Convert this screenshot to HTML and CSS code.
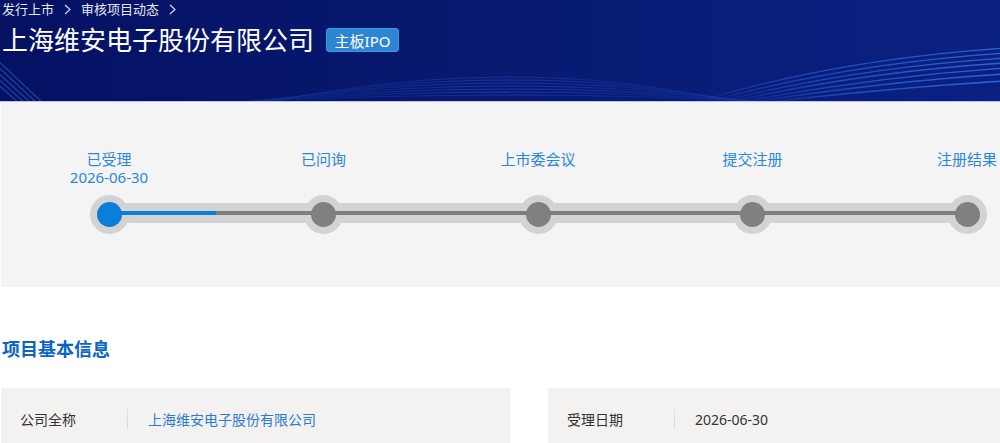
FILE: index.html
```html
<!DOCTYPE html>
<html lang="zh-CN">
<head>
<meta charset="utf-8">
<title>上海维安电子股份有限公司</title>
<link rel="stylesheet" href="styles.css">
</head>
<body>
<header class="hero">
  <svg class="hero-bg" width="1000" height="101" viewBox="0 0 1000 101" preserveAspectRatio="none" aria-hidden="true">
    <defs>
      <linearGradient id="rg" x1="0" y1="0" x2="1" y2="0">
        <stop offset="0" stop-color="#2f66e0" stop-opacity="0"/>
        <stop offset="0.35" stop-color="#2f66e0" stop-opacity="0.6"/>
        <stop offset="1" stop-color="#3a74ea" stop-opacity="0.8"/>
      </linearGradient>
      <linearGradient id="mg" x1="0" y1="0" x2="1" y2="0">
        <stop offset="0" stop-color="#2a5ad8" stop-opacity="0.05"/>
        <stop offset="0.5" stop-color="#2a5ad8" stop-opacity="0.45"/>
        <stop offset="1" stop-color="#2a5ad8" stop-opacity="0.05"/>
      </linearGradient>
    </defs>
    <g fill="none" stroke="#3d72e6" stroke-width="1.2" opacity="0.5">
      <path d="M-5 58 L44 104"/>
      <path d="M-5 64 L38 104"/>
      <path d="M-5 70 L32 104"/>
      <path d="M-5 76 L26 104"/>
      <path d="M-5 82 L20 104"/>
    </g>
    <g fill="none" stroke="url(#mg)" stroke-width="1.2">
      <path d="M260 104 Q520 50 740 104"/>
      <path d="M250 104 Q520 56 750 104"/>
      <path d="M240 104 Q520 62 760 104"/>
      <path d="M230 104 Q520 68 770 104"/>
      <path d="M220 104 Q520 74 780 104"/>
      <path d="M210 104 Q520 80 790 104"/>
      <path d="M200 104 Q520 86 800 104"/>
    </g>
    <g fill="none" stroke="url(#rg)" stroke-width="1.4">
      <path d="M690 104 Q830 60 1005 48"/>
      <path d="M700 104 Q840 64 1005 53"/>
      <path d="M710 104 Q850 68 1005 58"/>
      <path d="M720 104 Q860 72 1005 63"/>
      <path d="M730 104 Q870 77 1005 68"/>
      <path d="M740 104 Q880 82 1005 74"/>
      <path d="M750 104 Q890 88 1005 81"/>
    </g>
  </svg>
  <nav class="crumbs">
    <span>发行上市</span>
    <svg class="chev" width="7" height="11" viewBox="0 0 7 11" aria-hidden="true"><polyline points="1,1 6,5.5 1,10" fill="none" stroke="#d6dbee" stroke-width="1.2"/></svg>
    <span>审核项目动态</span>
    <svg class="chev" width="7" height="11" viewBox="0 0 7 11" aria-hidden="true"><polyline points="1,1 6,5.5 1,10" fill="none" stroke="#d6dbee" stroke-width="1.2"/></svg>
  </nav>
  <div class="title-row">
    <h1 class="company">上海维安电子股份有限公司</h1>
    <span class="badge">主板IPO</span>
  </div>
</header>

<section class="progress">
  <div class="track">
    <div class="steps">
      <div class="step done">
        <div class="label">已受理</div>
        <div class="date">2026-06-30</div>
        <div class="dot"></div>
      </div>
      <div class="step">
        <div class="label">已问询</div>
        <div class="date"></div>
        <div class="dot"></div>
      </div>
      <div class="step">
        <div class="label">上市委会议</div>
        <div class="date"></div>
        <div class="dot"></div>
      </div>
      <div class="step">
        <div class="label">提交注册</div>
        <div class="date"></div>
        <div class="dot"></div>
      </div>
      <div class="step">
        <div class="label">注册结果</div>
        <div class="date"></div>
        <div class="dot"></div>
      </div>
    </div>
  </div>
</section>

<section class="info">
  <h2 class="info-title">项目基本信息</h2>
  <div class="cards">
    <div class="card">
      <span class="k">公司全称</span>
      <span class="sep"></span>
      <span class="v link">上海维安电子股份有限公司</span>
    </div>
    <div class="card">
      <span class="k">受理日期</span>
      <span class="sep"></span>
      <span class="v">2026-06-30</span>
    </div>
  </div>
</section>
</body>
</html>
```

FILE: styles.css
```css
* { box-sizing: border-box; }
html, body { margin: 0; padding: 0; }
body {
  font-family: "Noto Sans", "Noto Sans CJK SC", sans-serif;
  background: #ffffff;
  width: 1000px;
  overflow: hidden;
}

.hero {
  position: relative;
  height: 102px;
  background: linear-gradient(90deg, #051163 0%, #07186e 40%, #0a2182 100%);
  border-bottom: 1px solid #b9c4e6;
  padding: 0 0 0 2px;
  overflow: hidden;
}
.hero-bg {
  position: absolute;
  left: 0;
  top: 0;
  width: 1000px;
  height: 101px;
}
.crumbs {
  position: relative;
  height: 19px;
  display: flex;
  align-items: center;
  font-size: 13px;
  line-height: 19px;
  color: #e4e8f4;
}
.crumbs .chev {
  margin: 0 10px 0 10px;
}
.title-row {
  position: relative;
  display: flex;
  align-items: center;
  gap: 12px;
  margin-top: 8px;
  height: 26px;
}
.company {
  margin: 0;
  font-size: 26px;
  font-weight: 400;
  line-height: 26px;
  color: #ffffff;
}
.badge {
  display: inline-flex;
  align-items: center;
  justify-content: center;
  height: 24px;
  width: 73px;
  border-radius: 3px;
  background: #2d86d4;
  color: #ffffff;
  font-size: 15px;
  border: 1px solid #4294dc;
}

.progress {
  margin-left: 1px;
  height: 185px;
  background: #f4f4f4;
  padding: 48px 15px 0 89px;
}
.track {
  position: relative;
  width: 896px;
}
.track::before {
  content: "";
  position: absolute;
  left: 19px;
  right: 19px;
  top: 53px;
  height: 20px;
  background: #d3d3d3;
  z-index: 0;
}
.track::after {
  content: "";
  position: absolute;
  left: 19px;
  right: 19px;
  top: 61px;
  height: 4px;
  background: linear-gradient(90deg, #0b7ddb 0, #0b7ddb 107px, #7f7f7f 107px, #7f7f7f 100%);
  z-index: 2;
}
.steps {
  display: flex;
  justify-content: space-between;
}
.step {
  width: 38px;
  display: flex;
  flex-direction: column;
  align-items: center;
}
.label, .date {
  white-space: nowrap;
  font-size: 15px;
  line-height: 19px;
  height: 19px;
  color: #2a86d9;
}
.date { margin-top: -1px; }
.dot {
  position: relative;
  margin-top: 8px;
  width: 39px;
  height: 39px;
  flex: none;
  border-radius: 50%;
  background: #d3d3d3;
}
.dot::after {
  content: "";
  position: absolute;
  left: 7px;
  top: 7px;
  width: 25px;
  height: 25px;
  border-radius: 50%;
  background: #808080;
  z-index: 3;
}
.step.done .dot::after { background: #0b7ddb; }

.info-title {
  margin: 0;
  padding: 50px 0 0 2px;
  height: 101px;
  font-size: 18px;
  line-height: 25px;
  font-weight: 700;
  color: #0b63c4;
}
.cards {
  display: flex;
  gap: 38px;
  padding-left: 1px;
}
.card {
  display: flex;
  align-items: center;
  height: 62px;
  background: #f3f2f1;
  padding-left: 19px;
  font-size: 14px;
  color: #333333;
}
.card:first-child { width: 509px; }
.card:last-child { flex: 1; }
.k { width: 107px; }
.sep {
  width: 1px;
  height: 20px;
  background: #dcdcdc;
  margin-right: 20px;
}
.v.link { color: #2a7ad0; }
```
